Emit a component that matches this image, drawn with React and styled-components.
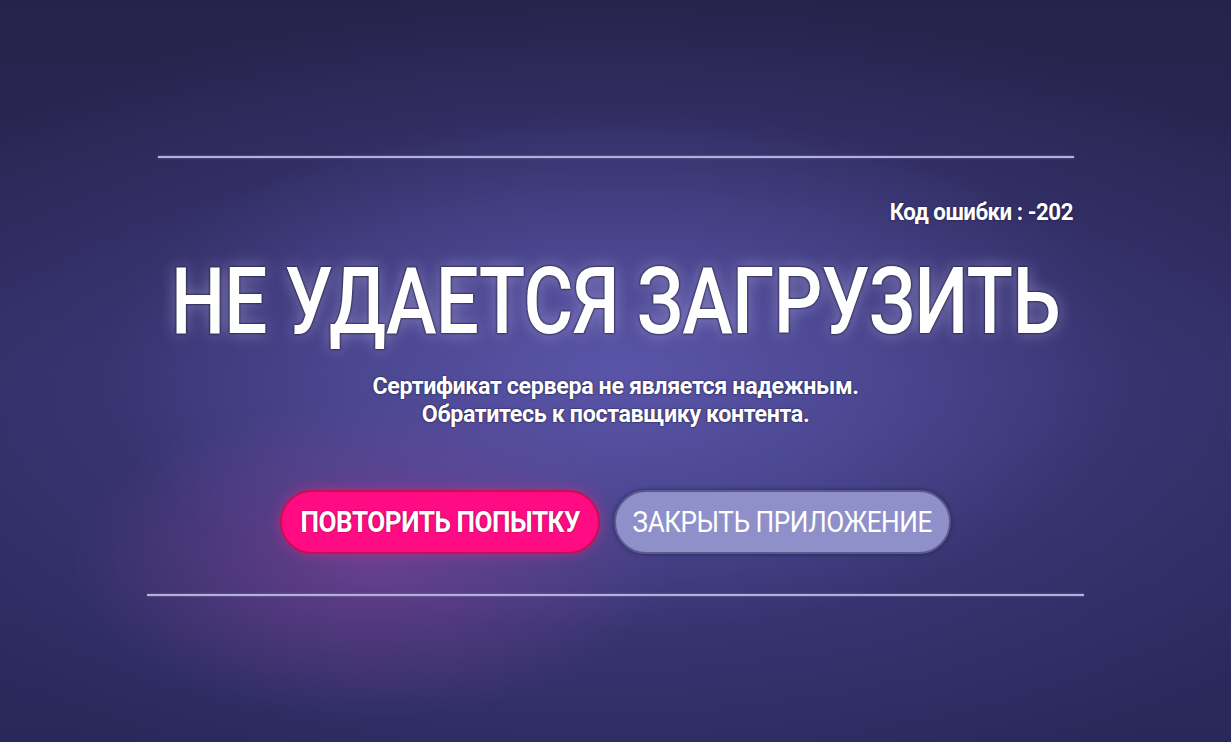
import styled, { createGlobalStyle } from "styled-components";

const GlobalStyle = createGlobalStyle`
  html, body {
    margin: 0;
    padding: 0;
    background: #2b2752;
  }
  body {
    font-family: Roboto, "Liberation Sans", sans-serif;
  }
`;

const App = () => {
  return (
    <Screen>
      <GlobalStyle />
      <Panel>
        <Rule />
        <ErrorCode>Код ошибки : -202</ErrorCode>
        <Title>НЕ УДАЕТСЯ ЗАГРУЗИТЬ</Title>
        <Message>
          Сертификат сервера не является надежным.
          <br />
          Обратитесь к поставщику контента.
        </Message>
        <Buttons>
          <Button primary>
            <Label>ПОВТОРИТЬ ПОПЫТКУ</Label>
          </Button>
          <Button>
            <Label>ЗАКРЫТЬ ПРИЛОЖЕНИЕ</Label>
          </Button>
        </Buttons>
        <Rule wide />
      </Panel>
    </Screen>
  );
};

//styled components
const Screen = styled.div`
  width: 1231px;
  height: 742px;
  overflow: hidden;
  display: flex;
  justify-content: center;
  background:
    radial-gradient(ellipse 300px 160px at 370px 560px, rgba(140, 70, 160, 0.55), transparent),
    radial-gradient(ellipse 520px 260px at 620px 370px, rgba(95, 90, 175, 0.8), transparent),
    radial-gradient(ellipse 820px 420px at 610px 410px, rgba(70, 66, 140, 0.9), transparent),
    linear-gradient(180deg, #26224a 0%, #302c62 50%, #29285a 100%);
`;

const Panel = styled.div`
  width: 930px;
  padding-top: 156px;
  display: flex;
  flex-direction: column;
  align-items: center;
  color: #fff;
`;

const Rule = styled.div`
  width: ${(p) => (p.wide ? "937px" : "916px")};
  height: 2px;
  background: #b4b0dc;
  margin-top: ${(p) => (p.wide ? "40px" : "0")};
  box-shadow: 0 0 2px rgba(200, 190, 240, 0.5);
`;

const ErrorCode = styled.div`
  align-self: flex-end;
  margin-right: 8px;
  margin-top: 41px;
  font-size: 23px;
  line-height: 27px;
  font-weight: 700;
  letter-spacing: -0.5px;
  transform: scaleX(0.97);
  transform-origin: right center;
  text-shadow: 0 0 2px rgba(20, 15, 40, 0.8);
`;

const Title = styled.h1`
  margin: 30px 0 0;
  font-size: 92px;
  font-weight: 500;
  line-height: 1;
  letter-spacing: -1px;
  white-space: nowrap;
  transform: scaleX(0.83);
  text-shadow:
    0 0 2px rgba(10, 8, 30, 0.9),
    0 0 3px rgba(10, 8, 30, 0.7),
    0 0 18px rgba(220, 210, 255, 0.45);
`;

const Message = styled.p`
  margin: 24px 0 0;
  font-size: 24px;
  font-weight: 700;
  line-height: 28px;
  text-align: center;
  letter-spacing: -0.4px;
  white-space: nowrap;
  transform: scaleX(0.97);
  text-shadow: 0 0 2px rgba(10, 8, 30, 0.9);
`;

const Buttons = styled.div`
  margin-top: 62px;
  display: flex;
  gap: 14px;
  align-items: center;
`;

const Button = styled.button`
  height: 64px;
  width: ${(p) => (p.primary ? "320px" : "337px")};
  padding: 0;
  display: flex;
  align-items: center;
  justify-content: center;
  border-radius: 32px;
  border: 2px solid ${(p) => (p.primary ? "#c8104e" : "#5a5a90")};
  background: ${(p) => (p.primary ? "#ff0c84" : "#8f90c9")};
  color: #fff;
  font-family: Roboto, "Liberation Sans", sans-serif;
  font-size: 29px;
  font-weight: ${(p) => (p.primary ? 700 : 400)};
  letter-spacing: -0.5px;
  box-shadow: ${(p) =>
    p.primary
      ? "0 0 14px rgba(255, 40, 150, 0.45)"
      : "0 0 4px rgba(20, 15, 50, 0.6)"};
  text-shadow: ${(p) => (p.primary ? "0 0 2px rgba(80, 0, 30, 0.7)" : "none")};
  white-space: nowrap;
  cursor: pointer;
`;

const Label = styled.span`
  display: inline-block;
  transform: scaleX(0.9);
`;

export default App;
